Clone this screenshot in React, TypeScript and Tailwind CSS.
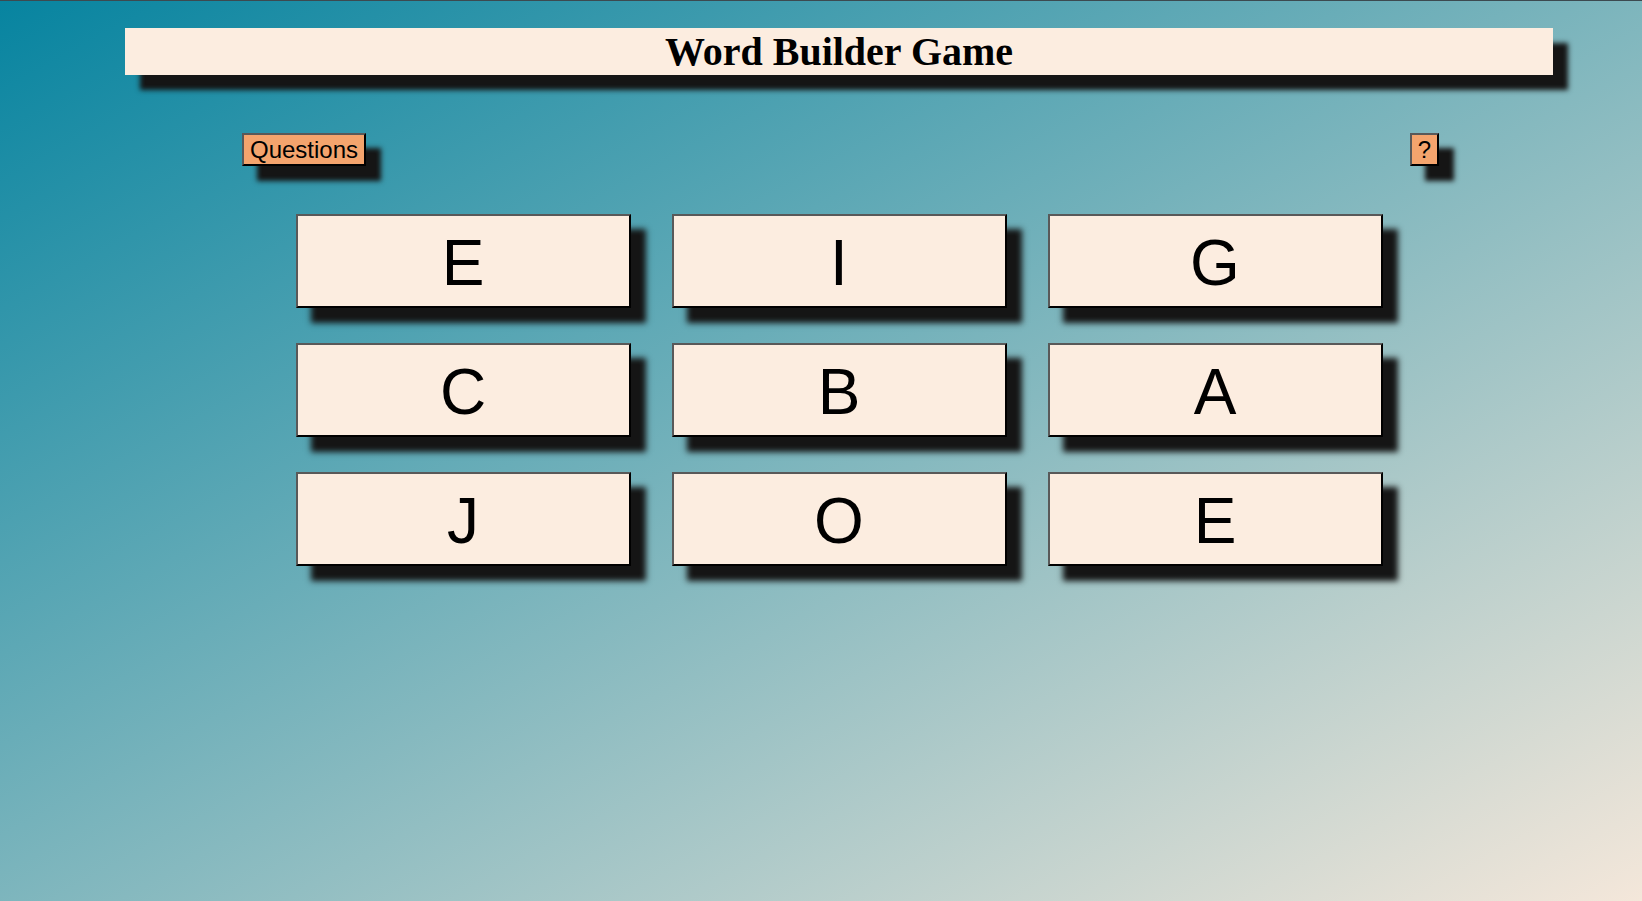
import React from 'react';

const letters = ['E', 'I', 'G', 'C', 'B', 'A', 'J', 'O', 'E'];

const btnBorder =
  'border-2 border-t-[#595959] border-l-[#595959] border-b-black border-r-black';

export default function App() {
  return (
    <div className="min-h-screen w-full border-t border-[#3c4a50] bg-[linear-gradient(to_bottom_right,#0784a0,#f4e7da)] pl-[36px] font-['Liberation_Sans',Arial,sans-serif]">
      <div className="flex flex-col items-center pt-[27px]">
        {/* Title bar */}
        <div className="w-[1428px] h-[47px] bg-[#fcede0] shadow-[15px_15px_5px_#151515] flex items-center justify-center">
          <h1 className="font-['Liberation_Serif','Times_New_Roman',serif] font-bold text-[40px] leading-none text-black">
            Word Builder Game
          </h1>
        </div>

        {/* Controls */}
        <div className="w-[1197px] ml-[3px] flex justify-between mt-[58px]">
          <button
            className={`${btnBorder} bg-[#f4a46d] text-[24px] leading-[27px] px-[6px] py-[1px] text-black shadow-[15px_15px_5px_#151515]`}
          >
            Questions
          </button>
          <button
            className={`${btnBorder} bg-[#f4a46d] text-[24px] leading-[27px] px-[6px] py-[1px] text-black shadow-[15px_15px_5px_#151515]`}
          >
            ?
          </button>
        </div>

        {/* Letter tiles */}
        <div className="grid grid-cols-[repeat(3,335px)] gap-x-[41px] gap-y-[35px] mt-[48px]">
          {letters.map((l, i) => (
            <button
              key={i}
              className={`${btnBorder} w-[335px] h-[94px] bg-[#fcede0] flex items-center justify-center pt-[3px] text-[64px] leading-none text-black shadow-[15px_15px_6px_#151515]`}
            >
              {l}
            </button>
          ))}
        </div>
      </div>
    </div>
  );
}
